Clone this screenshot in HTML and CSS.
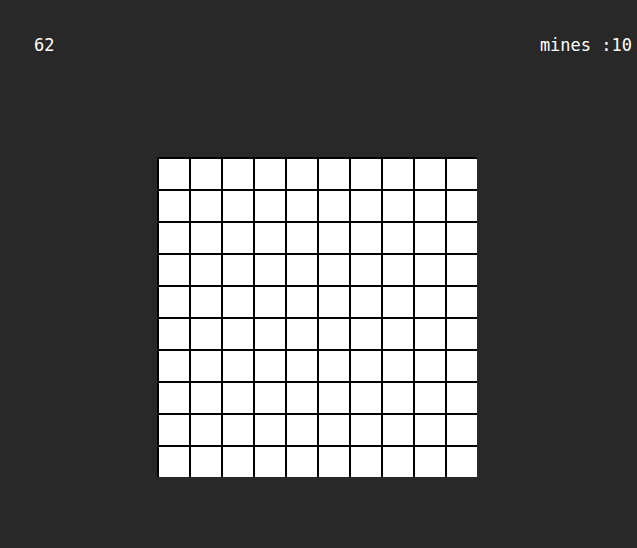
FILE: index.html
```html
<!DOCTYPE html>
<html>
<head>
<meta charset="utf-8">
<link rel="stylesheet" href="styles.css">
</head>
<body>
<div class="header">
  <span class="timer">62</span>
  <span class="mines">mines :10</span>
</div>
<div class="board">
  <div class="cell"></div><div class="cell"></div><div class="cell"></div><div class="cell"></div><div class="cell"></div><div class="cell"></div><div class="cell"></div><div class="cell"></div><div class="cell"></div><div class="cell"></div>
  <div class="cell"></div><div class="cell"></div><div class="cell"></div><div class="cell"></div><div class="cell"></div><div class="cell"></div><div class="cell"></div><div class="cell"></div><div class="cell"></div><div class="cell"></div>
  <div class="cell"></div><div class="cell"></div><div class="cell"></div><div class="cell"></div><div class="cell"></div><div class="cell"></div><div class="cell"></div><div class="cell"></div><div class="cell"></div><div class="cell"></div>
  <div class="cell"></div><div class="cell"></div><div class="cell"></div><div class="cell"></div><div class="cell"></div><div class="cell"></div><div class="cell"></div><div class="cell"></div><div class="cell"></div><div class="cell"></div>
  <div class="cell"></div><div class="cell"></div><div class="cell"></div><div class="cell"></div><div class="cell"></div><div class="cell"></div><div class="cell"></div><div class="cell"></div><div class="cell"></div><div class="cell"></div>
  <div class="cell"></div><div class="cell"></div><div class="cell"></div><div class="cell"></div><div class="cell"></div><div class="cell"></div><div class="cell"></div><div class="cell"></div><div class="cell"></div><div class="cell"></div>
  <div class="cell"></div><div class="cell"></div><div class="cell"></div><div class="cell"></div><div class="cell"></div><div class="cell"></div><div class="cell"></div><div class="cell"></div><div class="cell"></div><div class="cell"></div>
  <div class="cell"></div><div class="cell"></div><div class="cell"></div><div class="cell"></div><div class="cell"></div><div class="cell"></div><div class="cell"></div><div class="cell"></div><div class="cell"></div><div class="cell"></div>
  <div class="cell"></div><div class="cell"></div><div class="cell"></div><div class="cell"></div><div class="cell"></div><div class="cell"></div><div class="cell"></div><div class="cell"></div><div class="cell"></div><div class="cell"></div>
  <div class="cell"></div><div class="cell"></div><div class="cell"></div><div class="cell"></div><div class="cell"></div><div class="cell"></div><div class="cell"></div><div class="cell"></div><div class="cell"></div><div class="cell"></div>
</div>
</body>
</html>
```
FILE: styles.css
```css
html, body {
  margin: 0;
  padding: 0;
  background: #282828;
  height: 100%;
}
body {
  color: #ffffff;
  font-family: "DejaVu Sans Mono", monospace;
}
.header {
  display: flex;
  justify-content: space-between;
  padding: 35px 5px 0 34px;
  font-size: 17px;
  line-height: 20px;
}
.board {
  display: grid;
  grid-template-columns: repeat(10, 32px);
  grid-auto-rows: 32px;
  width: 320px;
  margin: 102px 0 0 157px;
}
.cell {
  background: #ffffff;
  border-top: 2px solid #000000;
  border-left: 2px solid #000000;
}
```
